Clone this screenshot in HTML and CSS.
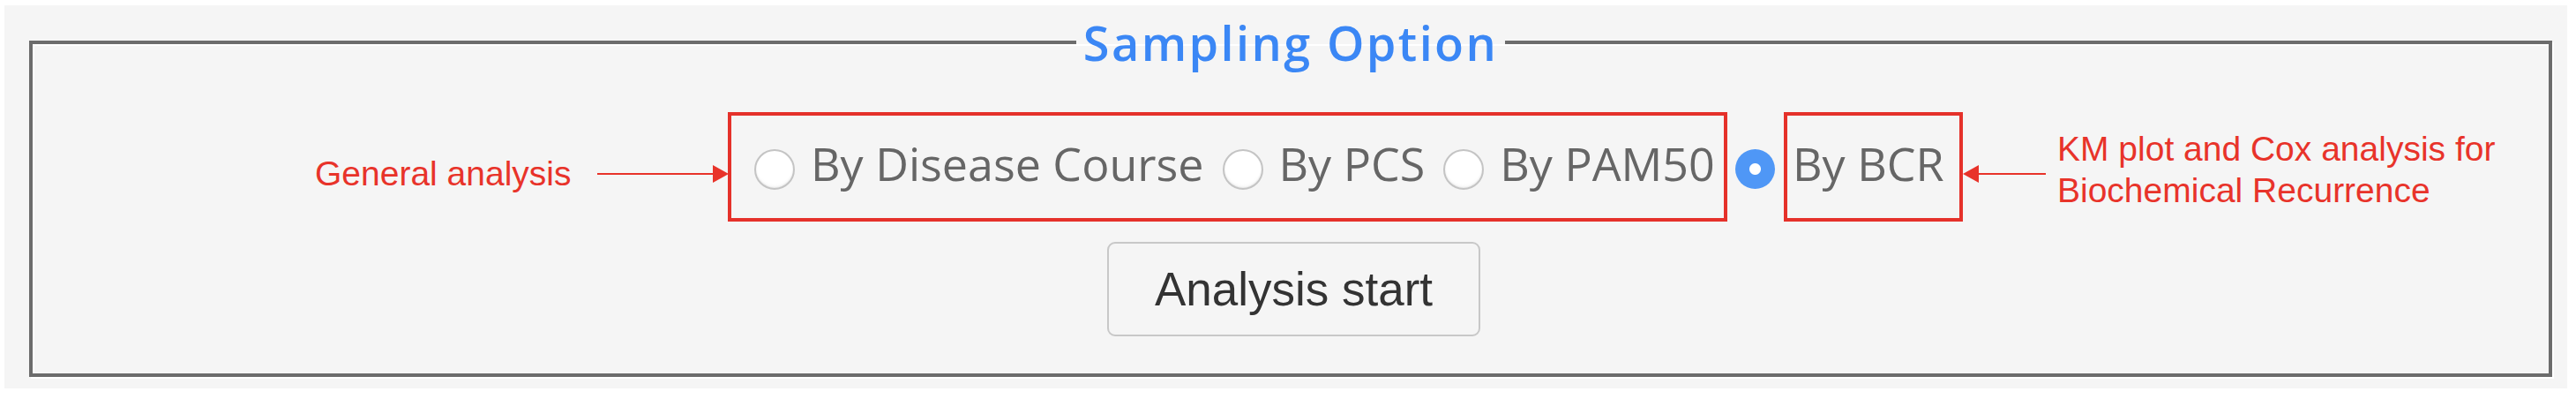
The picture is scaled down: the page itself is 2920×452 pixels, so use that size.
FILE: index.html
```html
<!DOCTYPE html>
<html lang="en">
<head>
<meta charset="utf-8">
<title>Sampling Option</title>
<link rel="stylesheet" href="styles.css">
</head>
<body>
<div class="panel">
  <fieldset class="sampling">
    <legend class="sampling-title">Sampling Option</legend>
    <div class="option-row">
      <span class="note note-left">General analysis</span>
      <svg class="arrow arrow-right" width="149" height="20" viewBox="0 0 149 20" aria-hidden="true">
        <rect x="0" y="9" width="132" height="2" fill="#e8332a"/>
        <polygon points="131,0 149,10 131,20" fill="#e8332a"/>
      </svg>
      <div class="mark-box mark-box-group">
        <label class="choice"><input type="radio" name="sampling" class="radio"><span class="choice-text">By Disease Course</span></label>
        <label class="choice"><input type="radio" name="sampling" class="radio"><span class="choice-text">By PCS</span></label>
        <label class="choice"><input type="radio" name="sampling" class="radio"><span class="choice-text">By PAM50</span></label>
      </div>
      <input type="radio" name="sampling" class="radio radio-bcr" checked>
      <div class="mark-box mark-box-bcr">
        <span class="choice-text">By BCR</span>
      </div>
      <svg class="arrow arrow-left" width="94" height="20" viewBox="0 0 94 20" aria-hidden="true">
        <polygon points="0,10 18,0 18,20" fill="#e8332a"/>
        <rect x="17" y="9" width="77" height="2" fill="#e8332a"/>
      </svg>
      <span class="note note-right">KM plot and Cox analysis for<br>Biochemical Recurrence</span>
    </div>
    <div class="action-row">
      <button type="button" class="start-btn">Analysis start</button>
    </div>
  </fieldset>
</div>
</body>
</html>
```
FILE: styles.css
```css
html, body {
  margin: 0;
  background: #ffffff;
}
body {
  padding: 6px 10px 13px 5px;
}
.panel {
  background: #f5f5f5;
  padding: 5px 17px 13px 28px;
}
.sampling {
  margin: 0;
  min-width: 0;
  padding: 42px 0 42px 0;
  border: 4px solid #6c6c6c;
  box-shadow: inset 2px 2px 0 #ffffff, 2px 2px 0 #ffffff;
}
.sampling-title {
  margin: 0 auto;
  padding: 0 8px 0 8px;
  font-family: "Open Sans", "Noto Sans", sans-serif;
  font-weight: 600;
  font-size: 54px;
  line-height: 74px;
  letter-spacing: 2.4px;
  color: #3b87f5;
}
.option-row {
  display: flex;
  align-items: center;
  height: 124px;
  padding-left: 320px;
}
.note {
  font-family: "Liberation Sans", Arial, sans-serif;
  font-size: 39px;
  color: #e8332a;
  white-space: nowrap;
}
.note-left {
  width: 290px;
  margin-top: 15px;
}
.note-right {
  line-height: 47px;
  margin-top: 5px;
  margin-left: 13px;
}
.arrow {
  display: block;
  flex: none;
  margin-top: 16px;
}
.arrow-right {
  margin-left: 30px;
}
.mark-box {
  box-sizing: border-box;
  height: 124px;
  border: 4px solid #e5312a;
  display: flex;
  align-items: center;
  flex: none;
  padding-top: 5px;
}
.mark-box-group {
  width: 1133px;
  margin-left: -1px;
  padding-left: 26px;
  gap: 21px;
}
.mark-box-bcr {
  width: 203px;
  margin-left: 10px;
  padding-left: 6px;
}
.choice {
  display: flex;
  align-items: center;
  gap: 18px;
}
.choice-text {
  font-family: "Open Sans", "Noto Sans", sans-serif;
  font-weight: 400;
  font-size: 52px;
  color: #666666;
  white-space: nowrap;
  margin-bottom: 14px;
}
.radio {
  -webkit-appearance: none;
  appearance: none;
  flex: none;
  box-sizing: border-box;
  width: 46px;
  height: 46px;
  margin: 0;
  border-radius: 50%;
  border: 2px solid #c4c4c4;
  background: radial-gradient(circle at 50% 40%, #ffffff 60%, #f1f1f1 100%);
  box-shadow: inset 0 -1px 2px rgba(0, 0, 0, 0.08);
}
.radio-bcr {
  width: 45px;
  height: 45px;
  margin-left: 9px;
  margin-top: 5px;
  border: none;
  background: radial-gradient(circle at 50% 50%, #ffffff 0 6px, #4f97f6 7px);
  box-shadow: none;
}
.action-row {
  display: flex;
  justify-content: center;
  padding-top: 23px;
  padding-left: 7px;
}
.start-btn {
  box-sizing: border-box;
  width: 423px;
  height: 107px;
  border: 2px solid #c8c8c8;
  border-radius: 9px;
  background: #f5f5f5;
  font-family: "Liberation Sans", Arial, sans-serif;
  font-size: 53px;
  color: #333333;
  padding: 0;
}
```
